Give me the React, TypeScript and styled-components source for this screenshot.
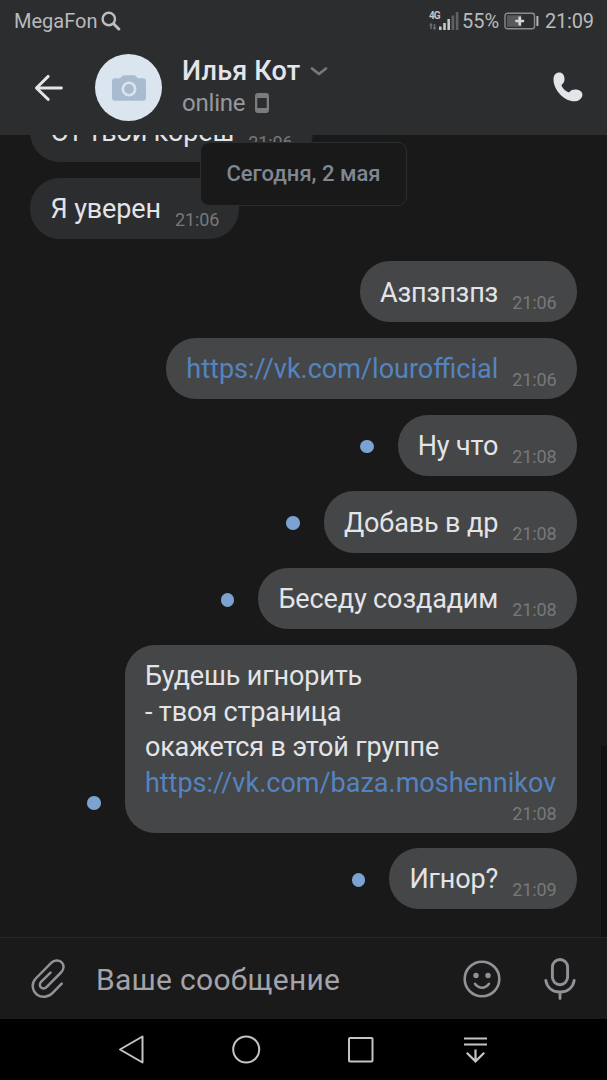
import styled, { createGlobalStyle } from "styled-components";

type Message = {
  lines?: string[];
  link?: string;
  time: string;
  own?: boolean;
  unread?: boolean;
  tall?: boolean;
};

const messages: Message[] = [
  { lines: ["От твой кореш"], time: "21:06" },
  { lines: ["Я уверен"], time: "21:06" },
  { lines: ["Азпзпзпз"], time: "21:06", own: true },
  { link: "https://vk.com/lourofficial", time: "21:06", own: true },
  { lines: ["Ну что"], time: "21:08", own: true, unread: true },
  { lines: ["Добавь в др"], time: "21:08", own: true, unread: true },
  { lines: ["Беседу создадим"], time: "21:08", own: true, unread: true },
  {
    lines: ["Будешь игнорить", "- твоя страница", "окажется в этой группе"],
    link: "https://vk.com/baza.moshennikov",
    time: "21:08",
    own: true,
    unread: true,
    tall: true,
  },
  { lines: ["Игнор?"], time: "21:09", own: true, unread: true },
];

const SearchIcon = () => (
  <svg width="20" height="20" viewBox="0 0 20 20" fill="none" stroke="#bdbdbe">
    <circle cx="7.8" cy="8" r="6.2" strokeWidth="2.4" />
    <path d="M12.6 12.8L17.8 18" strokeWidth="3" strokeLinecap="round" />
  </svg>
);

const SignalIcon = () => (
  <svg width="30" height="20" viewBox="0 0 30 20">
    <path
      d="M2 18V13M.8 14.6L2 13l1.2 1.6M5.5 13v5M4.3 16.4l1.2 1.6 1.2-1.6"
      stroke="#6c6d6f"
      fill="none"
      strokeWidth="1.5"
    />
    <g fill="#c6c6c7">
      <rect x="10" y="15.5" width="2.6" height="3.5" />
      <rect x="14.2" y="12" width="2.6" height="7" />
      <rect x="18.4" y="8" width="2.6" height="11" />
    </g>
    <g fill="#606163">
      <rect x="22.6" y="4.5" width="2.6" height="14.5" />
      <rect x="26.8" y="1" width="2.6" height="18" />
    </g>
  </svg>
);

const BatteryIcon = () => (
  <svg width="35" height="18" viewBox="0 0 35 18">
    <rect x="1" y="1.2" width="29.5" height="15.6" rx="2.6" fill="none" stroke="#8b8c8d" strokeWidth="1.4" />
    <rect x="3" y="3.2" width="14.5" height="11.6" fill="#58595a" />
    <path d="M15.7 4.6v8.8M11.3 9h8.8" stroke="#d6d6d6" strokeWidth="2.7" />
    <path d="M33.4 4v10" stroke="#b5b5b6" strokeWidth="2" />
  </svg>
);

const BackIcon = () => (
  <svg width="30" height="28" viewBox="0 0 30 28" fill="none" stroke="#e4e5e8" strokeWidth="2.9" strokeLinecap="round" strokeLinejoin="round">
    <path d="M14.2 2.4L2.4 14l11.8 11.4M2.8 14h24.6" />
  </svg>
);

const CameraIcon = () => (
  <svg width="34" height="26" viewBox="0 0 34 26">
    <path
      d="M3 3.300H8L10.300 1Q11 .300 12 .300h10q1 0 1.700.700L26 3.300h5Q34 3.300 34 6.300V22.700Q34 25.700 31 25.700H3Q0 25.700 0 22.700V6.300Q0 3.300 3 3.300z"
      fill="#a9bccf"
    />
    <circle cx="17" cy="14" r="6.2" fill="none" stroke="#dae5ef" strokeWidth="2.6" />
  </svg>
);

const ChevronIcon = () => (
  <svg width="18" height="10" viewBox="0 0 18 10" fill="none" stroke="#77787a" strokeWidth="2.7" strokeLinecap="round" strokeLinejoin="round">
    <path d="M2 2.500l7 5.500L16 2.500" />
  </svg>
);

const PhoneBadge = () => (
  <svg width="14" height="20" viewBox="0 0 14 20">
    <path
      fillRule="evenodd"
      fill="#7b7c7e"
      d="M3 0h8q3 0 3 3v14q0 3-3 3H3q-3 0-3-3V3q0-3 3-3zM2.300 5v10h9.400V5z"
    />
  </svg>
);

const CallIcon = () => (
  <svg width="30" height="30" viewBox="0 0 30 30" fill="#e4e5ea">
    <path d="M5.600.6C8.800.1 11.300 2.500 11.500 6.500c.1 2.900-.6 4.300-2.600 6.100-.5.500-.5 1 0 1.800 1.500 2.500 3.300 4.300 6 5.700.8.400 1.200.4 1.800-.3 1.600-1.900 3.600-2.600 6.600-2.300 3.700.4 6.300 2.600 6.100 5.400-.3 3.600-3.700 6.400-8 6.400C11.500 29.300.500 18.300.500 7.500.5 3.400 2.600 1 5.600.6z" />
  </svg>
);

const ClipIcon = () => (
  <svg width="34" height="40" viewBox="0 0 34 40" fill="none" stroke="#919297" strokeWidth="2.500" strokeLinecap="round" strokeLinejoin="round">
    <path d="M30.700 24.700l-9 9.200c-4.600 4.600-11 5-15.600 1.800C.800 31.300.300 24.100 4.800 19.500L20.200 3.900c3.100-3.100 7.500-3.300 10.300-.7 2.900 2.800 2.600 7.200-.5 10.300L15.800 27.900c-1.700 1.800-4.300 2-5.900.5-1.500-1.600-1.300-4 .4-5.700L19.500 13.600" />
  </svg>
);

const SmileIcon = () => (
  <svg width="38" height="38" viewBox="0 0 38 38" fill="none" stroke="#919297">
    <circle cx="19" cy="19" r="17.300" strokeWidth="2.600" />
    <circle cx="13" cy="15.500" r="2.700" fill="#919297" stroke="none" />
    <circle cx="25" cy="15.500" r="2.700" fill="#919297" stroke="none" />
    <path d="M12 23.800c3.800 5.200 10.200 5.200 14 0" strokeWidth="2.600" strokeLinecap="round" />
  </svg>
);

const MicIcon = () => (
  <svg width="32" height="42" viewBox="0 0 32 42" fill="none" stroke="#919297" strokeWidth="2.900" strokeLinecap="round">
    <rect x="8.400" y="1.500" width="15.200" height="25.200" rx="7.600" />
    <path d="M1.800 22.500C3.200 30 9 34 16 34s12.800-4 14.200-11.500M16 34v6.500" />
  </svg>
);

const NavBackIcon = () => (
  <svg width="28" height="30" viewBox="0 0 28 30" fill="none" stroke="#c4c4c4" strokeWidth="2" strokeLinejoin="round">
    <path d="M24.500 1.500v26L2 14.500z" />
  </svg>
);

const NavHomeIcon = () => (
  <svg width="29" height="30" viewBox="0 0 29 30" fill="none" stroke="#c4c4c4" strokeWidth="2">
    <circle cx="14.2" cy="14.500" r="13" />
  </svg>
);

const NavRecentIcon = () => (
  <svg width="30" height="28" viewBox="0 0 30 28" fill="none" stroke="#c4c4c4" strokeWidth="2">
    <rect x="2" y="2" width="23.500" height="23.500" rx="1" />
  </svg>
);

const NavDropIcon = () => (
  <svg width="24" height="28" viewBox="0 0 24 28" fill="none" stroke="#c4c4c4" strokeWidth="2.200">
    <path d="M1 2.500h23M1 8.500h23M12.500 13.500v11.500M3.800 16.700l8.700 8.700 8.700-8.700" />
  </svg>
);

export default function App() {
  return (
    <>
      <GlobalStyle />
      <Screen>
        <Header>
          <StatusBar>
            <Carrier>MegaFon</Carrier>
            <SearchIcon />
            <StatusRight>
              <Network>
                <NetworkLabel>4G</NetworkLabel>
                <SignalIcon />
              </Network>
              <Percent>55%</Percent>
              <BatteryIcon />
              <Clock>21:09</Clock>
            </StatusRight>
          </StatusBar>
          <TitleBar>
            <BackIcon />
            <Avatar>
              <CameraIcon />
            </Avatar>
            <Person>
              <NameRow>
                <Name>Илья Кот</Name>
                <ChevronIcon />
              </NameRow>
              <OnlineRow>
                <Online>online</Online>
                <PhoneBadge />
              </OnlineRow>
            </Person>
            <CallButton>
              <CallIcon />
            </CallButton>
          </TitleBar>
        </Header>

        <Chat>
          <DateChip>Сегодня, 2 мая</DateChip>
          <Scrollbar />
          {messages.map((m, i) => (
            <Row key={i} $own={m.own}>
              {m.unread && <UnreadDot />}
              <Bubble $own={m.own} $tall={m.tall}>
                <Body>
                  {m.lines?.map((line) => (
                    <Line key={line}>{line}</Line>
                  ))}
                  {m.link && <Link>{m.link}</Link>}
                </Body>
                <Time>{m.time}</Time>
              </Bubble>
            </Row>
          ))}
        </Chat>

        <Composer>
          <ClipIcon />
          <Placeholder>Ваше сообщение</Placeholder>
          <Actions>
            <SmileIcon />
            <MicIcon />
          </Actions>
        </Composer>

        <NavBar>
          <NavBackIcon />
          <NavHomeIcon />
          <NavRecentIcon />
          <NavDropIcon />
        </NavBar>
      </Screen>
    </>
  );
}

const GlobalStyle = createGlobalStyle`
  * {
    box-sizing: border-box;
  }

  body {
    margin: 0;
    background: #000;
    font-family: Roboto, sans-serif;
  }

  svg {
    display: block;
    flex-shrink: 0;
  }
`;

const Screen = styled.div`
  display: flex;
  flex-direction: column;
  width: 607px;
  height: 1080px;
  overflow: hidden;
  white-space: nowrap;
  background: #191919;
`;

const Header = styled.header`
  flex: none;
  height: 135px;
  background: #2c2d2f;
`;

const StatusBar = styled.div`
  display: flex;
  align-items: center;
  height: 42px;
  padding: 0 13px 0 14px;
  color: #b9babb;
  font-size: 20px;
`;

const Carrier = styled.span`
  width: 87px;
`;

const StatusRight = styled.div`
  display: flex;
  align-items: center;
  margin-left: auto;
`;

const Network = styled.div`
  position: relative;
  margin-right: 3px;
`;

const NetworkLabel = styled.span`
  position: absolute;
  left: 0;
  top: 0;
  font-size: 10px;
  font-weight: 700;
  line-height: 10px;
  letter-spacing: -1px;
  color: #c6c6c7;
`;

const Percent = styled.span`
  width: 42px;
`;

const Clock = styled.span`
  width: 49px;
  margin-left: 6px;
  letter-spacing: -0.2px;
`;

const TitleBar = styled.div`
  display: flex;
  align-items: center;
  height: 91px;
  padding: 0 24.5px 0 34px;
`;

const Avatar = styled.div`
  display: flex;
  align-items: center;
  justify-content: center;
  width: 67px;
  height: 67px;
  margin-left: 31px;
  border-radius: 50%;
  background: #dae5ef;
`;

const Person = styled.div`
  flex: 1;
  margin: -1px 0 0 20px;
`;

const NameRow = styled.div`
  display: flex;
  align-items: center;
  gap: 10px;
  height: 31px;
`;

const Name = styled.span`
  font-size: 27px;
  font-weight: 500;
  letter-spacing: 0.2px;
  color: #e4e5ea;
`;

const OnlineRow = styled.div`
  display: flex;
  align-items: center;
  gap: 9.5px;
  height: 32px;
`;

const Online = styled.span`
  font-size: 24px;
  letter-spacing: -0.2px;
  color: #97989a;
`;

const CallButton = styled.div`
  padding-bottom: 2px;
`;

const Chat = styled.main`
  position: relative;
  flex: none;
  display: flex;
  flex-direction: column;
  justify-content: flex-end;
  height: 802px;
  padding: 0 30.5px 27.7px 30px;
  overflow: hidden;
`;

const DateChip = styled.div`
  position: absolute;
  left: 200px;
  top: 7px;
  width: 207px;
  height: 64px;
  border: 1px solid #2c2d2e;
  border-radius: 9px;
  background: #191919;
  color: #7f8794;
  font-size: 22px;
  font-weight: 500;
  line-height: 61px;
  text-align: center;
`;

const Scrollbar = styled.div`
  position: absolute;
  right: 0;
  bottom: 0;
  width: 6px;
  height: 191px;
  background: #111;
`;

const Row = styled.div<{ $own?: boolean }>`
  display: flex;
  flex: none;
  align-items: flex-end;
  justify-content: ${(p) => (p.$own ? "flex-end" : "flex-start")};
  margin-top: 15.4px;

  &:nth-child(5) {
    margin-top: 22.3px;
  }
`;

const UnreadDot = styled.div`
  width: 13.5px;
  height: 13.5px;
  margin: 0 24px 22.7px 0;
  border-radius: 50%;
  background: #7ba2d0;
`;

const Bubble = styled.div<{ $own?: boolean; $tall?: boolean }>`
  display: flex;
  flex-direction: ${(p) => (p.$tall ? "column" : "row")};
  align-items: flex-end;
  justify-content: space-between;
  height: ${(p) => (p.$tall ? "188px" : "61.3px")};
  padding: 14.4px 20.3px ${(p) => (p.$tall ? "8.5px" : "9px")}
    ${(p) => (p.$own ? "20px" : "20.5px")};
  border-radius: 30px;
  background: ${(p) => (p.$own ? "#454647" : "#2c2d2f")};
`;

const Body = styled.div`
  align-self: flex-start;
  color: #e3e4e8;
  font-size: 27px;
  line-height: 35.5px;
`;

const Line = styled.div`
  letter-spacing: -0.13px;
`;

const Link = styled.div`
  color: #5484c0;
`;

const Time = styled.span`
  width: 44px;
  margin-left: 14px;
  color: #77787a;
  font-size: 18px;
  line-height: 20px;
  letter-spacing: -0.1px;
`;

const Composer = styled.footer`
  flex: none;
  display: flex;
  align-items: center;
  height: 82px;
  padding: 0 31px;
  border-top: 1px solid #262627;
  background: #1a1a1a;
`;

const Placeholder = styled.span`
  flex: 1;
  margin: 2px 0 0 31px;
  color: #a3a4a9;
  font-size: 30px;
  letter-spacing: 0.28px;
`;

const Actions = styled.div`
  display: flex;
  align-items: center;
  gap: 43px;
`;

const NavBar = styled.nav`
  flex: none;
  display: flex;
  align-items: center;
  gap: 86px;
  height: 61px;
  padding-left: 118px;
  background: #000;
`;
